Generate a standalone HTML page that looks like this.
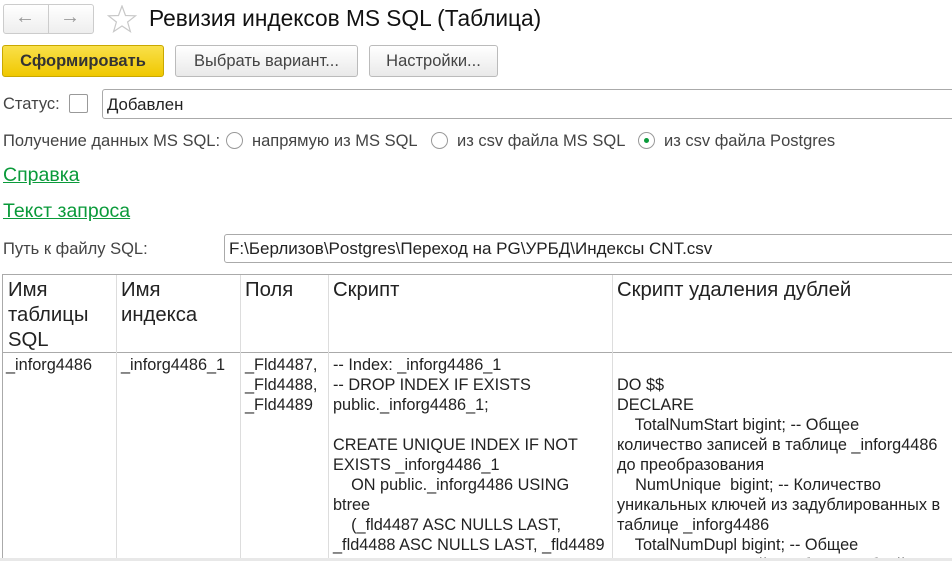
<!DOCTYPE html>
<html><head><meta charset="utf-8"><style>
*{margin:0;padding:0;box-sizing:border-box}
html,body{width:952px;height:561px;overflow:hidden}
body{background:#fff;font-family:"Liberation Sans",Arial,sans-serif;color:#333;position:relative}
.a{position:absolute;white-space:nowrap}
.btn{position:absolute;border:1px solid #bbb;border-radius:3px;background:linear-gradient(#fff,#e9e9e9);font-size:16.5px;color:#444;text-align:center;line-height:30px;height:32px}
.rad{position:absolute;width:17px;height:17px;border:1px solid #999;border-radius:50%;background:#fff}
.link{position:absolute;color:#0a9a3a;text-decoration:underline;font-size:19.5px;white-space:nowrap}
.cell{position:absolute;font-size:16.3px;line-height:20px;white-space:pre;color:#222}
.hd{position:absolute;font-size:20.3px;line-height:25px;color:#222}
.vl{position:absolute;top:275px;height:290px;width:1px;background:#ddd}
.lb{position:absolute;font-size:16.5px;color:#444;white-space:nowrap}
</style></head><body>
<div class="a" style="left:3px;top:4px;width:91px;height:30px;border:1px solid #ccc;border-radius:3px;background:linear-gradient(#fff,#eee)"></div>
<div class="a" style="left:48px;top:5px;width:1px;height:28px;background:#ccc"></div>
<div class="a" style="left:15px;top:6px;font-size:20px;color:#999">&#8592;</div>
<div class="a" style="left:60px;top:6px;font-size:20px;color:#999">&#8594;</div>
<svg class="a" style="left:107px;top:5px" width="30" height="28" viewBox="0 0 30 28"><polygon points="15,1 18.5,10.5 28.5,10.8 20.6,17 23.4,26.6 15,21 6.6,26.6 9.4,17 1.5,10.8 11.5,10.5" fill="none" stroke="#c8c8c8" stroke-width="1.2"/></svg>
<div class="a" style="left:149px;top:5px;font-size:22.7px;color:#111">Ревизия индексов MS SQL (Таблица)</div>

<div class="btn" style="left:2px;top:45px;width:162px;background:linear-gradient(#f9e04a,#f0c800);border-color:#c9a800;font-weight:bold;color:#333">Сформировать</div>
<div class="btn" style="left:175px;top:45px;width:183px">Выбрать вариант...</div>
<div class="btn" style="left:369px;top:45px;width:129px">Настройки...</div>

<div class="lb" style="left:3px;top:95px">Статус:</div>
<div class="a" style="left:69px;top:94px;width:19px;height:19px;border:1px solid #999;border-radius:2px"></div>
<div class="a" style="left:102px;top:89px;width:860px;height:30px;border:1px solid #aaa;border-radius:3px"></div>
<div class="a" style="left:107px;top:95px;font-size:16.8px;color:#222">Добавлен</div>

<div class="lb" style="left:3px;top:132px">Получение данных MS SQL:</div>
<div class="rad" style="left:226px;top:132px"></div>
<div class="lb" style="left:252px;top:132px">напрямую из MS SQL</div>
<div class="rad" style="left:431px;top:132px"></div>
<div class="lb" style="left:457px;top:132px">из csv файла MS SQL</div>
<div class="rad" style="left:638px;top:132px"></div>
<div class="a" style="left:644px;top:138px;width:5px;height:5px;border-radius:50%;background:#0a9a3a"></div>
<div class="lb" style="left:664px;top:132px">из csv файла Postgres</div>

<div class="link" style="left:3px;top:164px">Справка</div>
<div class="link" style="left:3px;top:200px">Текст запроса</div>

<div class="lb" style="left:3px;top:240px">Путь к файлу SQL:</div>
<div class="a" style="left:224px;top:234px;width:740px;height:29px;border:1px solid #aaa;border-radius:3px"></div>
<div class="a" style="left:229px;top:239px;font-size:17px;color:#222">F:\Берлизов\Postgres\Переход на PG\УРБД\Индексы CNT.csv</div>

<div class="a" style="left:2px;top:274px;width:960px;height:300px;border:1px solid #aaa"></div>
<div class="a" style="left:3px;top:352px;width:960px;height:1px;background:#aaa"></div>
<div class="vl" style="left:116px"></div>
<div class="vl" style="left:240px"></div>
<div class="vl" style="left:328px"></div>
<div class="vl" style="left:612px"></div>

<div class="hd" style="left:8px;top:278px">Имя<br>таблицы<br>SQL</div>
<div class="hd" style="left:121px;top:278px">Имя<br>индекса</div>
<div class="hd" style="left:245px;top:278px">Поля</div>
<div class="hd" style="left:333px;top:278px">Скрипт</div>
<div class="hd" style="left:617px;top:278px">Скрипт удаления дублей</div>

<div class="cell" style="left:6px;top:355px">_inforg4486</div>
<div class="cell" style="left:121px;top:355px">_inforg4486_1</div>
<div class="cell" style="left:245px;top:355px">_Fld4487,
_Fld4488,
_Fld4489</div>
<div class="cell" style="left:333px;top:355px">-- Index: _inforg4486_1
-- DROP INDEX IF EXISTS
public._inforg4486_1;

CREATE UNIQUE INDEX IF NOT
EXISTS _inforg4486_1
    ON public._inforg4486 USING
btree
    (_fld4487 ASC NULLS LAST,
_fld4488 ASC NULLS LAST, _fld4489
ASC NULLS LAST)</div>
<div class="cell" style="left:617px;top:355px">
DO $$
DECLARE
    TotalNumStart bigint; -- Общее
количество записей в таблице _inforg4486
до преобразования
    NumUnique  bigint; -- Количество
уникальных ключей из задублированных в
таблице _inforg4486
    TotalNumDupl bigint; -- Общее
количество записей в таблице дублей</div>
<div class="a" style="left:0;top:558px;width:952px;height:3px;background:#e8e8e8"></div>
</body></html>
